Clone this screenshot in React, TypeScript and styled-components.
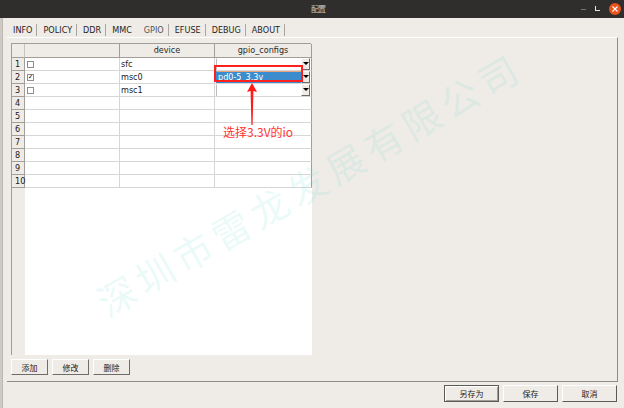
import React from "react";
import styled, { createGlobalStyle } from "styled-components";

const GlobalStyle = createGlobalStyle`
  html, body {
    margin: 0;
    padding: 0;
    background: #efebe7;
  }
  * {
    box-sizing: border-box;
  }
`;

const SANS = `"DejaVu Sans Condensed", "Liberation Sans", "Noto Sans CJK SC", sans-serif`;
const CJK = `"Noto Sans CJK SC", "Liberation Sans", sans-serif`;

const TABS = ["INFO", "POLICY", "DDR", "MMC", "GPIO", "EFUSE", "DEBUG", "ABOUT"];

const ROWS = [
  { checked: false, device: "sfc", combo: "" },
  { checked: true, device: "msc0", combo: "pd0-5_3.3v" },
  { checked: false, device: "msc1", combo: "" },
  null,
  null,
  null,
  null,
  null,
  null,
  null,
];

function App() {
  return (
    <>
      <GlobalStyle />
      <Window>
        <TitleBar>
          <span />
          <Title>配置</Title>
          <Controls>
            <MinBtn />
            <MaxBtn />
            <CloseBtn>
              <svg width="6" height="6" viewBox="0 0 6 6">
                <path d="M0.5 0.5 L5.5 5.5 M5.5 0.5 L0.5 5.5" stroke="#fff" strokeWidth="1.1" />
              </svg>
            </CloseBtn>
          </Controls>
        </TitleBar>
        <Body>
          <LeftEdge />
          <Main>
            <TabBar>
              {TABS.map((t) => (
                <Tab key={t} $active={t === "GPIO"} $sep={t !== "MMC"} $wide={t === "MMC"}>
                  {t}
                </Tab>
              ))}
            </TabBar>
            <Pane>
              <Grid>
                <HeadCell $corner />
                <HeadCell />
                <HeadCell>device</HeadCell>
                <HeadCell>gpio_configs</HeadCell>
                {ROWS.map((r, i) => (
                  <React.Fragment key={i}>
                    <RowNum>{i + 1}</RowNum>
                    <DataCell>{r ? <Check>{r.checked ? "✓" : ""}</Check> : null}</DataCell>
                    <DataCell>{r ? r.device : ""}</DataCell>
                    <DataCell $last>
                      {r ? (
                        <Combo>
                          <ComboField $selected={!!r.combo}>{r.combo}</ComboField>
                          <ComboButton>
                            <Caret />
                          </ComboButton>
                        </Combo>
                      ) : null}
                    </DataCell>
                  </React.Fragment>
                ))}
                <FillerNum />
                <Filler />
              </Grid>
              <ButtonRow>
                <SmallButton>添加</SmallButton>
                <SmallButton>修改</SmallButton>
                <SmallButton>删除</SmallButton>
              </ButtonRow>
            </Pane>
            <Footer>
              <DialogButton $default>另存为</DialogButton>
              <DialogButton>保存</DialogButton>
              <DialogButton>取消</DialogButton>
            </Footer>
          </Main>
        </Body>
        <Watermark>深圳市雷龙发展有限公司</Watermark>
        <HighlightBox />
        <Arrow width="12" height="44" viewBox="0 0 12 44">
          <polygon points="6,0 11,9 7.4,8 6.6,42 5.4,42 4.6,8 1,9" fill="#ff1a1a" />
        </Arrow>
        <Note>选择3.3V的io</Note>
      </Window>
    </>
  );
}

const Window = styled.div`
  position: relative;
  width: 624px;
  height: 408px;
  display: flex;
  flex-direction: column;
  background: #efebe7;
  overflow: hidden;
  font-family: ${SANS};
  font-size: 9px;
  color: #1a1a1a;
`;

const TitleBar = styled.div`
  height: 18px;
  flex: none;
  display: grid;
  grid-template-columns: 1fr auto 1fr;
  align-items: center;
  background: #2f2e2c;
`;

const Title = styled.div`
  font-family: ${CJK};
  font-size: 8px;
  line-height: 8px;
  color: #c9c4bf;
  letter-spacing: -1px;
  padding-left: 12px;
`;

const Controls = styled.div`
  display: flex;
  align-items: center;
  justify-content: flex-end;
  gap: 9px;
  padding-right: 3px;
`;

const MinBtn = styled.div`
  width: 5px;
  height: 1px;
  background: #77736f;
`;

const MaxBtn = styled.div`
  width: 5px;
  height: 5px;
  border-left: 1px solid #e8e6e3;
  border-bottom: 1px solid #e8e6e3;
  margin-top: -1px;
`;

const CloseBtn = styled.div`
  width: 12px;
  height: 12px;
  border-radius: 50%;
  background: #e9541e;
  display: flex;
  align-items: center;
  justify-content: center;
`;

const Body = styled.div`
  flex: 1;
  display: flex;
`;

const LeftEdge = styled.div`
  width: 3px;
  background: #cdc9c4;
  border-right: 1px solid #bdb8b3;
`;

const Main = styled.div`
  flex: 1;
  display: flex;
  flex-direction: column;
  padding: 0 6px 0 4px;
`;

const TabBar = styled.div`
  display: flex;
  align-items: center;
  height: 13px;
  margin-top: 5px;
`;

const Tab = styled.div<{ $active?: boolean; $sep?: boolean; $wide?: boolean }>`
  height: 12px;
  line-height: 12px;
  padding: 0 ${(p) => (p.$wide ? "5px" : "4px")} 0 6px;
  color: ${(p) => (p.$active ? "#555" : "#1e1e1e")};
  border-right: 1px solid ${(p) => (p.$sep ? "#a9a5a0" : "transparent")};
`;

const Pane = styled.div`
  margin-top: 1px;
  border-top: 1px solid #ffffff;
  border-right: 1px solid #8e8b87;
  border-bottom: 1px solid #8e8b87;
  padding: 5px 0 6px 4px;
  display: flex;
  flex-direction: column;
  gap: 4px;
`;

const Grid = styled.div`
  width: 300px;
  height: 312px;
  display: grid;
  grid-template-columns: 13px 95px 95px 97px;
  grid-template-rows: 14px repeat(10, 13px) 1fr;
  background: #ffffff;
  border-left: 1px solid #a19e9a;
  border-top: 1px solid #a19e9a;
`;

const HeadCell = styled.div<{ $corner?: boolean }>`
  background: #efebe7;
  border-right: 1px solid #a19e9a;
  border-bottom: 1px solid #a19e9a;
  text-align: center;
  line-height: 13px;
  color: #2a2a2a;
  ${(p) => (p.$corner ? "border-right-color: #c6c2bd;" : "")}
`;

const RowNum = styled.div`
  background: #efebe7;
  border-right: 1px solid #a19e9a;
  border-bottom: 1px solid #a19e9a;
  padding-left: 3px;
  line-height: 12px;
`;

const DataCell = styled.div<{ $last?: boolean }>`
  position: relative;
  border-right: 1px solid ${(p) => (p.$last ? "#a19e9a" : "#d6d6d6")};
  border-bottom: 1px solid #d6d6d6;
  line-height: 12px;
  padding-left: 1px;
  display: flex;
  align-items: center;
  white-space: nowrap;
`;

const Check = styled.div`
  width: 7px;
  height: 7px;
  margin-left: 1px;
  border: 1px solid #8d8d8d;
  background: #fff;
  font-size: 7px;
  line-height: 5px;
  text-align: center;
  font-weight: bold;
  color: #000;
`;

const Combo = styled.div`
  display: flex;
  width: 94px;
  height: 12px;
  margin-top: -1px;
`;

const ComboField = styled.div<{ $selected?: boolean }>`
  flex: 1;
  background: ${(p) => (p.$selected ? "#3a8ccc" : "#ffffff")};
  color: #ffffff;
  border-top: 1px solid ${(p) => (p.$selected ? "#e7a37c" : "#ffffff")};
  border-left: 1px solid ${(p) => (p.$selected ? "#3a8ccc" : "#bdbdbd")};
  line-height: 10px;
  padding-left: 1px;
`;

const ComboButton = styled.div`
  width: 9px;
  background: #efebe7;
  border-top: 1px solid #ffffff;
  border-left: 1px solid #ffffff;
  border-right: 1px solid #6e6b68;
  border-bottom: 1px solid #6e6b68;
  display: flex;
  align-items: center;
  justify-content: center;
`;

const Caret = styled.div`
  width: 0;
  height: 0;
  border-left: 3px solid transparent;
  border-right: 3px solid transparent;
  border-top: 3px solid #000;
`;

const FillerNum = styled.div`
  background: #efebe7;
`;

const Filler = styled.div`
  grid-column: 2 / span 3;
  background: #ffffff;
`;

const ButtonRow = styled.div`
  display: flex;
  gap: 4px;
`;

const SmallButton = styled.div`
  width: 37px;
  height: 16px;
  display: flex;
  align-items: center;
  justify-content: center;
  font-family: ${CJK};
  font-size: 8px;
  color: #222;
  background: #efebe7;
  border-top: 1px solid #ffffff;
  border-left: 1px solid #ffffff;
  border-right: 1px solid #6f6c69;
  border-bottom: 1px solid #6f6c69;
`;

const Footer = styled.div`
  display: flex;
  justify-content: flex-end;
  gap: 4px;
  margin-top: 3px;
  padding-right: 1px;
`;

const DialogButton = styled.div<{ $default?: boolean }>`
  width: 55px;
  height: 17px;
  display: flex;
  align-items: center;
  justify-content: center;
  font-family: ${CJK};
  font-size: 8px;
  color: #222;
  background: #efebe7;
  border-top: 1px solid ${(p) => (p.$default ? "#5c5a57" : "#ffffff")};
  border-left: 1px solid ${(p) => (p.$default ? "#5c5a57" : "#ffffff")};
  border-right: 1px solid #5c5a57;
  border-bottom: 1px solid #5c5a57;
  box-shadow: ${(p) => (p.$default ? "inset 1px 1px 0 #ffffff, inset -1px -1px 0 #a09d99" : "none")};
`;

const Watermark = styled.div`
  position: absolute;
  left: 309px;
  top: 183px;
  transform: translate(-50%, -50%) rotate(-30deg);
  font-family: ${CJK};
  font-size: 38px;
  letter-spacing: 6px;
  white-space: nowrap;
  color: rgba(90, 215, 205, 0.13);
  pointer-events: none;
`;

const HighlightBox = styled.div`
  position: absolute;
  left: 214px;
  top: 65px;
  width: 89px;
  height: 17px;
  border: 2px solid #ff1f1f;
  pointer-events: none;
`;

const Arrow = styled.svg`
  position: absolute;
  left: 246px;
  top: 83px;
`;

const Note = styled.div`
  position: absolute;
  left: 223px;
  top: 125px;
  font-family: ${CJK};
  font-size: 12px;
  line-height: 14px;
  color: #ff3535;
  white-space: nowrap;
`;

export default App;
